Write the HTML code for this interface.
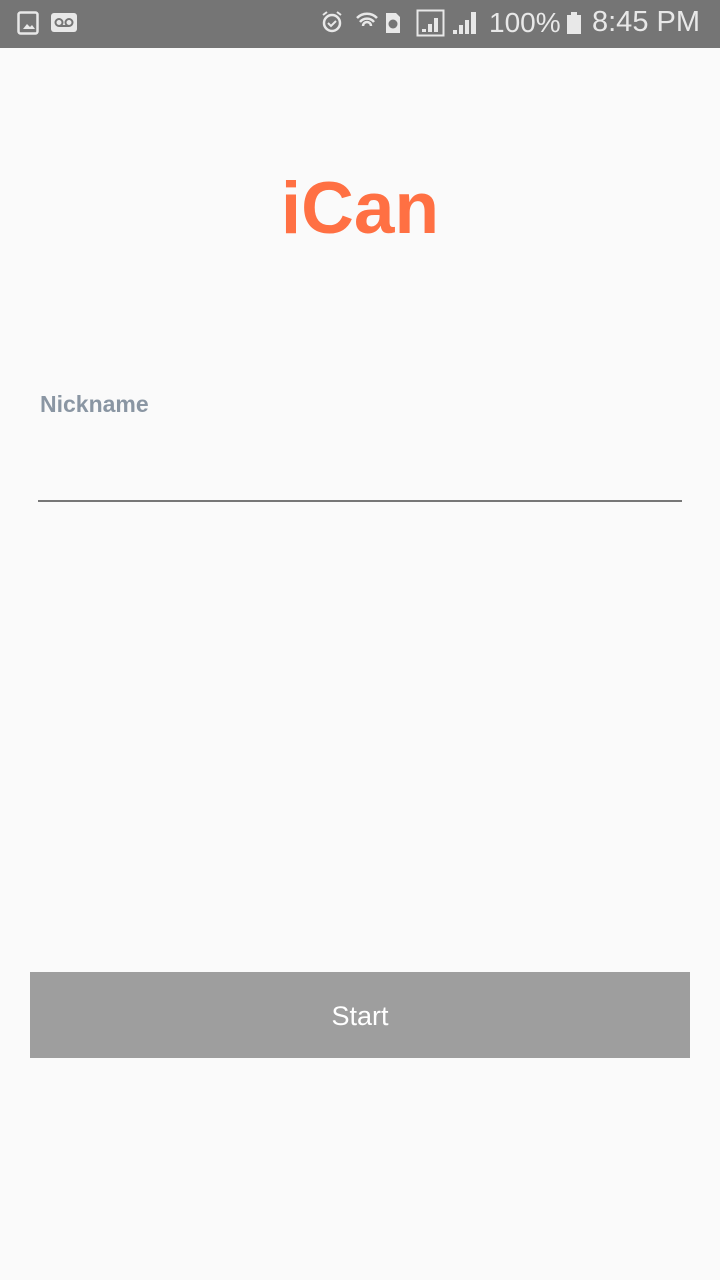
<!DOCTYPE html>
<html><head><style>
body{margin:0;width:720px;height:1280px;background:#fafafa;font-family:"Liberation Sans",sans-serif;position:relative;overflow:hidden}
.sb{position:absolute;left:0;top:0;width:720px;height:48px;background:#757575;color:#e8e8e8}
.t{position:absolute;font-size:29px;top:6px}
</style></head><body>
<div class="sb">
<svg width="720" height="48" style="position:absolute;left:0;top:0">
<rect x="18.5" y="12.5" width="19" height="21" rx="2" fill="none" stroke="#e8e8e8" stroke-width="2.5"/>
<path d="M23 29 l4-5 3 3 2-2 3 4z" fill="#e8e8e8"/>
<rect x="51" y="13" width="26" height="19" rx="3" fill="#e8e8e8"/>
<circle cx="59" cy="22.5" r="3.5" fill="none" stroke="#757575" stroke-width="2"/>
<circle cx="69" cy="22.5" r="3.5" fill="none" stroke="#757575" stroke-width="2"/>
<path d="M59 26h10" stroke="#757575" stroke-width="2"/>
<circle cx="332" cy="23" r="8" fill="none" stroke="#e8e8e8" stroke-width="2.5"/>
<path d="M328 23l3 3 5-5M323 15l4-3M341 15l-4-3" stroke="#e8e8e8" stroke-width="2" fill="none"/>
<path d="M357 18a14 14 0 0 1 20 0M360 22a9 9 0 0 1 14 0M363 26a4 4 0 0 1 8 0" stroke="#e8e8e8" stroke-width="2.5" fill="none"/>
<path d="M386 13h10l4 4v16h-14z" fill="#e8e8e8"/><circle cx="393" cy="24" r="4.5" fill="#757575"/>
<rect x="417.5" y="10.5" width="26" height="25" fill="none" stroke="#e8e8e8" stroke-width="2"/>
<path d="M422 32h4v-3h-4zM428 32h4v-8h-4zM434 32h4v-14h-4z" fill="#e8e8e8"/>
<path d="M453 34h4v-4h-4zM459 34h4v-9h-4zM465 34h4v-14h-4zM471 34h5v-22h-5z" fill="#e8e8e8"/>
<path d="M567 15h4v-3h6v3h4v19h-14z" fill="#e8e8e8"/>
</svg>
<div class="t" style="left:489px;font-size:28px;top:7px">100%</div>
<div class="t" style="left:592px">8:45 PM</div>
</div>
<div style="position:absolute;top:167px;width:720px;text-align:center;color:#ff7043;font-weight:bold;font-size:73px">iCan</div>
<div style="position:absolute;left:40px;top:391px;color:#8a96a3;font-weight:bold;font-size:23px">Nickname</div>
<div style="position:absolute;left:38px;top:500px;width:644px;height:2px;background:#777"></div>
<div style="position:absolute;left:30px;top:972px;width:660px;height:86px;background:#9e9e9e;color:#fff;font-size:27px;text-align:center;line-height:88px">Start</div>
</body></html>
